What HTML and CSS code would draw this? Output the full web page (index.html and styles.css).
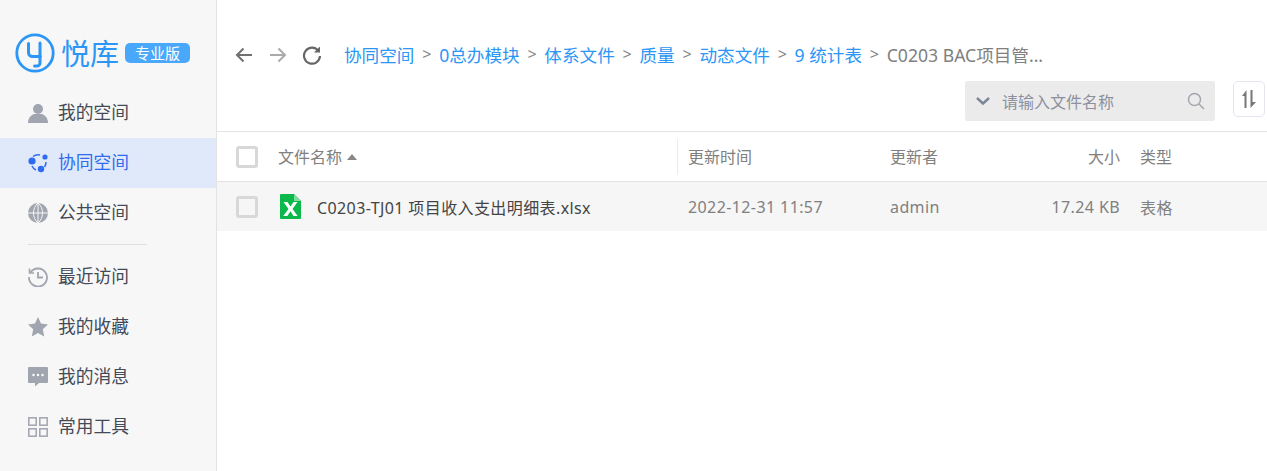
FILE: index.html
```html
<!DOCTYPE html>
<html lang="zh-CN">
<head>
    <meta charset="UTF-8">
    <meta name="viewport" content="width=device-width, initial-scale=1.0">
    <title>悦库 - 协同空间</title>
    <link rel="stylesheet" href="styles.css">
</head>
<body>
    <aside class="sidebar">
        <div class="logo">
            <svg class="logo-mark" width="40" height="40" viewBox="0 0 40 40" fill="none" stroke="#2b96f5">
                <circle cx="20" cy="20" r="18.2" stroke-width="2.8"/>
                <path d="M13.5 10.5v9a4 4 0 0 0 4 4h8M25 10v20a3 3 0 0 1-3 3h-2.500" stroke-width="3" stroke-linecap="round"/>
            </svg>
            <span class="logo-text">悦库</span>
            <span class="logo-badge">专业版</span>
        </div>
        <nav class="menu">
            <a class="menu-item">
                <svg width="20" height="20" viewBox="0 0 20 20" fill="#a1a5af"><circle cx="10" cy="6" r="5"/><path d="M0 20c0-5 3-8 6-9h8c3 1 6 4 6 9z"/></svg>
                <span>我的空间</span>
            </a>
            <a class="menu-item active">
                <svg width="20" height="20" viewBox="0 0 20 20" fill="#2f6bf0"><circle cx="4" cy="8" r="3.6"/><circle cx="17" cy="4" r="2.6"/><circle cx="13" cy="16" r="3.2"/><path d="M5 3.500a8 8 0 0 1 7-1.500M18 9a8 8 0 0 1-1.500 5M4 13a8 8 0 0 0 4 4" fill="none" stroke="#2f6bf0" stroke-width="1.500"/></svg>
                <span>协同空间</span>
            </a>
            <a class="menu-item">
                <svg width="20" height="20" viewBox="0 0 20 20"><circle cx="10" cy="10" r="10" fill="#a1a5af"/><path d="M10 0v20M0 10h20M10 0c-6 5-6 15 0 20M10 0c6 5 6 15 0 20" fill="none" stroke="#f7f7f7" stroke-width="1"/></svg>
                <span>公共空间</span>
            </a>
            <div class="menu-divider"></div>
            <a class="menu-item">
                <svg width="20" height="20" viewBox="0 0 20 20" fill="none" stroke="#a1a5af" stroke-width="1.800"><path d="M2.500 5.500A9 9 0 1 1 1 10"/><path d="M1.500 1.500v4.500h4.500" stroke-width="1.600"/><path d="M10 5v5.500h5"/></svg>
                <span>最近访问</span>
            </a>
            <a class="menu-item">
                <svg width="20" height="20" viewBox="0 0 20 20" fill="#a1a5af"><path d="M10 0l3 6.600 7 .8-5.200 4.800 1.400 7.200L10 16l-6.200 3.400 1.400-7.200L0 7.400l7-.8z"/></svg>
                <span>我的收藏</span>
            </a>
            <a class="menu-item">
                <svg width="20" height="20" viewBox="0 0 20 20" fill="#a1a5af"><path d="M1 0h18a1 1 0 0 1 1 1v14a1 1 0 0 1-1 1H11l-4 3.500V16H1a1 1 0 0 1-1-1V1a1 1 0 0 1 1-1z"/><circle cx="5.500" cy="8" r="1.200" fill="#fff"/><circle cx="10" cy="8" r="1.200" fill="#fff"/><circle cx="14.500" cy="8" r="1.200" fill="#fff"/></svg>
                <span>我的消息</span>
            </a>
            <a class="menu-item">
                <svg width="20" height="20" viewBox="0 0 20 20" fill="none" stroke="#a1a5af" stroke-width="1.500"><rect x=".8" y=".8" width="7.400" height="7.400"/><rect x="11.800" y=".8" width="7.400" height="7.400"/><rect x=".8" y="11.800" width="7.400" height="7.400"/><rect x="11.800" y="11.800" width="7.400" height="7.400"/></svg>
                <span>常用工具</span>
            </a>
        </nav>
    </aside>

    <main class="content">
        <div class="toolbar">
            <div class="nav-row">
                <div class="nav-buttons">
                    <svg width="20" height="20" viewBox="0 0 20 20" fill="none" stroke="#707070" stroke-width="2"><path d="M18 10H3M9.500 3.500L3 10l6.500 6.500"/></svg>
                    <svg width="20" height="20" viewBox="0 0 20 20" fill="none" stroke="#aaa" stroke-width="2"><path d="M2 10h15M10.500 3.500L17 10l-6.500 6.500"/></svg>
                    <svg width="20" height="20" viewBox="0 0 20 20" fill="none" stroke="#666" stroke-width="2.200"><path d="M16.500 6A8 8 0 1 0 18 11"/><path d="M18 1.500V7.500h-6" fill="#666" stroke="none"/></svg>
                </div>
                <div class="breadcrumb">
                    <a>协同空间</a><span class="sep">&gt;</span>
                    <a>0总办模块</a><span class="sep">&gt;</span>
                    <a>体系文件</a><span class="sep">&gt;</span>
                    <a>质量</a><span class="sep">&gt;</span>
                    <a>动态文件</a><span class="sep">&gt;</span>
                    <a>9 统计表</a><span class="sep">&gt;</span>
                    <span class="current">C0203 BAC项目管...</span>
                </div>
            </div>
            <div class="action-row">
                <div class="search">
                    <svg width="14" height="9" viewBox="0 0 14 9" fill="none" stroke="#7d8599" stroke-width="2.400"><path d="M1 1l6 5.500L13 1"/></svg>
                    <span class="search-text">请输入文件名称</span>
                    <svg width="18" height="18" viewBox="0 0 18 18" fill="none" stroke="#a3a6ad" stroke-width="1.500"><circle cx="7.500" cy="7.500" r="6"/><path d="M12 12l5 5"/></svg>
                </div>
                <button class="sort-btn">
                    <svg width="14" height="18" viewBox="0 0 14 18" fill="#777"><path d="M4.500 0v18H2.500V6H0zM8.500 0H10.500v12H14l-5.500 6z"/></svg>
                </button>
            </div>
        </div>

        <div class="file-table">
            <div class="table-row table-head">
                <span class="col-check"><i class="checkbox"></i></span>
                <span class="col-name">文件名称<i class="sort-arrow"></i></span>
                <span class="col-time">更新时间</span>
                <span class="col-user">更新者</span>
                <span class="col-size">大小</span>
                <span class="col-type">类型</span>
            </div>
            <div class="table-row file-row">
                <span class="col-check"><i class="checkbox"></i></span>
                <span class="col-name">
                    <svg class="file-icon" width="21" height="25" viewBox="0 0 21 25"><path d="M1 0h13l7 7v17a1 1 0 0 1-1 1H1a1 1 0 0 1-1-1V1a1 1 0 0 1 1-1z" fill="#0bb84a"/><path d="M14 0l7 7h-7z" fill="#7fdc9f"/><path d="M3.500 8h4l3 4.500L13.500 8h4l-5 7 5.200 7h-4.200l-3-4.700L7.300 22H3.200l5.300-7z" fill="#fff"/></svg>
                    <span class="file-name">C0203-TJ01 项目收入支出明细表.xlsx</span>
                </span>
                <span class="col-time">2022-12-31 11:57</span>
                <span class="col-user">admin</span>
                <span class="col-size">17.24 KB</span>
                <span class="col-type">表格</span>
            </div>
        </div>
    </main>
</body>
</html>
```

FILE: styles.css
```css
* {
    box-sizing: border-box;
}
html, body {
    height: 100%;
}
body {
    margin: 0;
    display: flex;
    overflow: hidden;
    font-family: "Noto Sans", "Noto Sans CJK SC", sans-serif;
    background: #fff;
}
.sidebar {
    width: 217px;
    flex-shrink: 0;
    background: #f7f7f7;
    border-right: 1px solid #e3e3e3;
}
.logo {
    height: 88px;
    padding: 18px 0 0 15px;
    display: flex;
    align-items: center;
}
.logo-mark {
    flex-shrink: 0;
}
.logo-text {
    margin-left: 6px;
    font-size: 29px;
    line-height: 1;
    color: #2b96f5;
}
.logo-badge {
    width: 65px;
    height: 20px;
    margin-left: 6px;
    flex-shrink: 0;
    border-radius: 5px;
    background: #4aa8fb;
    color: #fff;
    font-size: 15px;
    line-height: 20px;
    text-align: center;
}
.menu-item {
    height: 50px;
    padding-left: 28px;
    display: flex;
    align-items: center;
    gap: 10px;
    font-size: 17.75px;
    color: #444a58;
}
.menu-item span {
    margin-bottom: 4px;
}
.menu-item.active {
    background: #e0e9f9;
    color: #2f6bf0;
}
.menu-divider {
    width: 119px;
    height: 1px;
    margin: 6px 0 7px 28px;
    background: #dedede;
}
.content {
    flex: 1;
    min-width: 0;
}
.toolbar {
    height: 132px;
    padding-top: 41px;
    border-bottom: 1px solid #e3e3e3;
}
.nav-row {
    height: 27px;
    display: flex;
    align-items: center;
    padding-left: 17px;
}
.nav-buttons {
    display: flex;
    gap: 14px;
    width: 110px;
}
.breadcrumb {
    display: flex;
    align-items: center;
    margin-bottom: 1px;
    font-size: 17.6px;
    color: #2b96f5;
    white-space: nowrap;
}
.sep {
    margin: 0 7.8px;
    color: #888;
    font-size: 16px;
}
.current {
    color: #808080;
}
.action-row {
    margin-top: 13px;
    display: flex;
    justify-content: flex-end;
    align-items: flex-start;
    padding-right: 2px;
}
.search {
    width: 250px;
    height: 40px;
    padding: 0 10px 0 11px;
    display: flex;
    align-items: center;
    border-radius: 2px;
    background: #ebebeb;
}
.search-text {
    flex: 1;
    margin-left: 12px;
    font-size: 16px;
    color: #8d919e;
}
.sort-btn {
    width: 32px;
    height: 36px;
    margin-left: 18px;
    padding: 0;
    display: flex;
    align-items: center;
    justify-content: center;
    background: #fff;
    border: 1px solid #e4e6ee;
    border-radius: 5px;
}
.table-row {
    height: 50px;
    display: flex;
    align-items: center;
    font-size: 16px;
    color: #808080;
    border-bottom: 1px solid #e3e3e3;
}
.file-row {
    height: 49px;
    background: #f6f6f6;
    border-bottom: none;
    letter-spacing: .4px;
}
.col-check {
    width: 61px;
    padding-left: 19px;
    display: flex;
}
.checkbox {
    width: 22px;
    height: 22px;
    background: #fff;
    border: 3px solid #d8d8d8;
    border-radius: 3px;
}
.file-row .checkbox {
    background: #f6f6f6;
}
.col-name {
    width: 400px;
    height: 36px;
    display: flex;
    align-items: center;
}
.table-head .col-name {
    padding-bottom: 2px;
    border-right: 1px solid #ececec;
}
.table-head .col-time,
.table-head .col-user,
.table-head .col-size,
.table-head .col-type {
    margin-bottom: 2px;
}
.col-time {
    width: 212px;
    padding-left: 10px;
}
.col-user {
    width: 100px;
}
.col-size {
    width: 130px;
    text-align: right;
}
.col-type {
    margin-left: 20px;
}
.sort-arrow {
    width: 0;
    height: 0;
    margin: 2px 0 0 5px;
    border-left: 5px solid transparent;
    border-right: 5px solid transparent;
    border-bottom: 6px solid #888;
}
.file-icon {
    margin-left: 2px;
    flex-shrink: 0;
}
.file-name {
    margin-left: 16px;
    color: #444;
    white-space: nowrap;
}
```
